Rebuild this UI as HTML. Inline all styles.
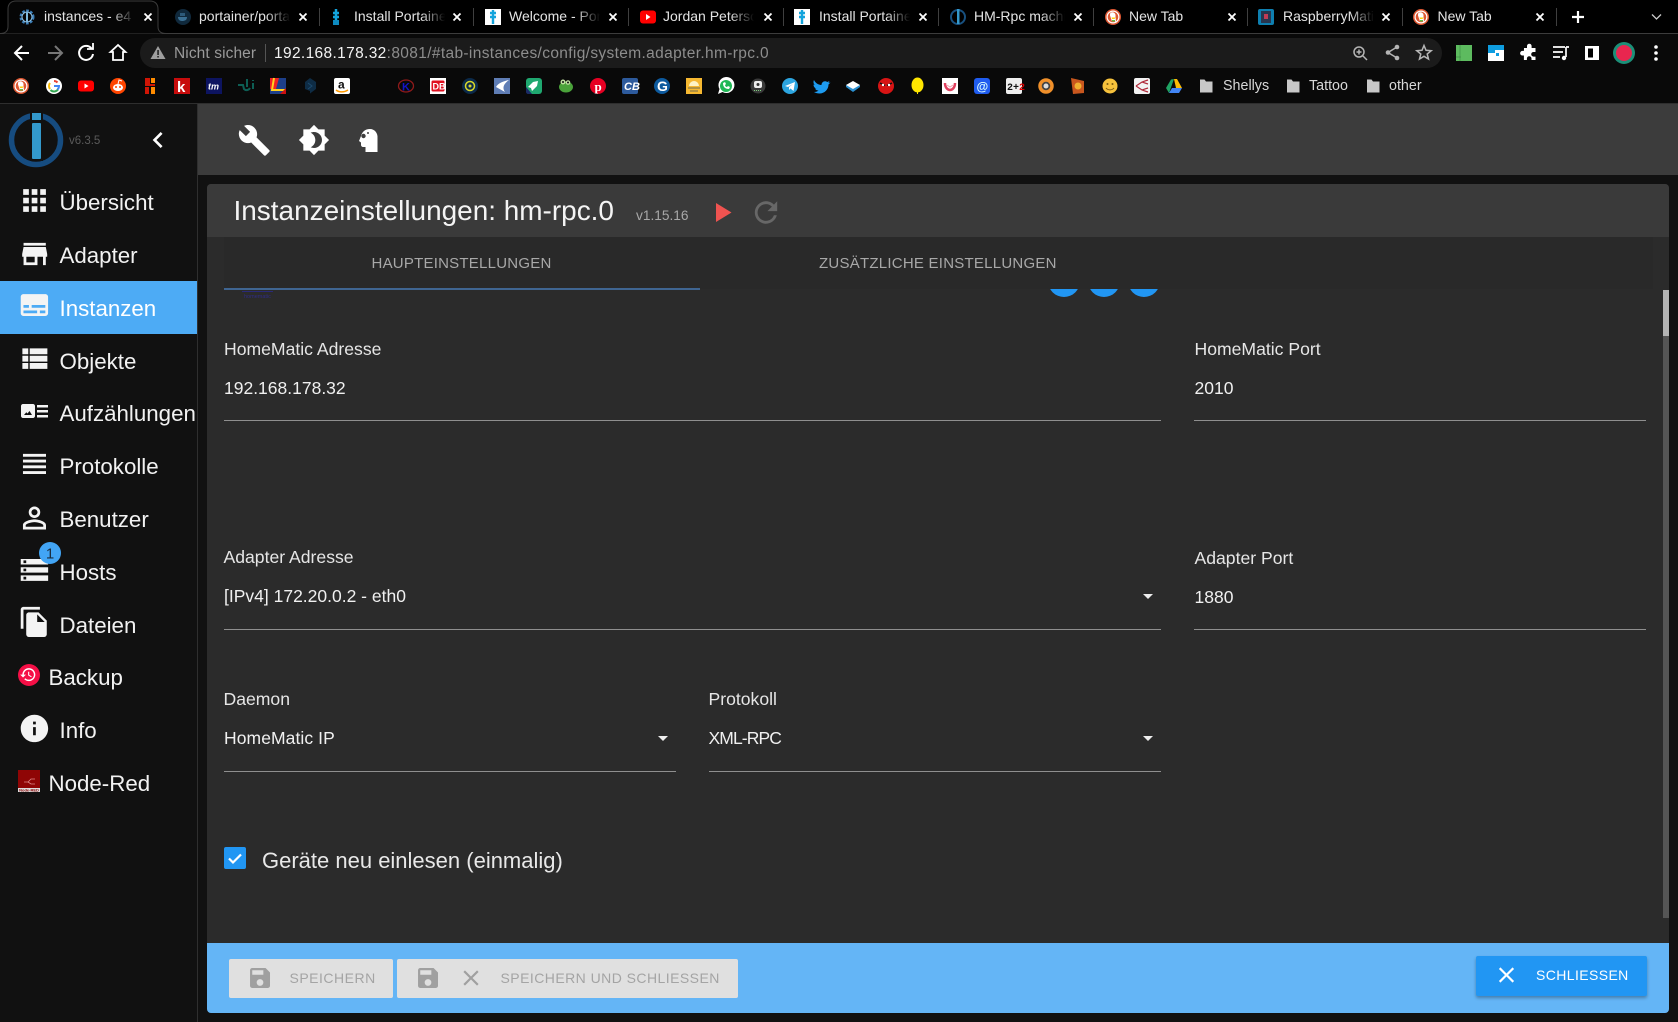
<!DOCTYPE html>
<html lang="de"><head><meta charset="utf-8"><title>instances</title>
<style>
html,body{margin:0;padding:0;width:1678px;height:1022px;overflow:hidden;background:#111}
body{position:relative;font-family:"Liberation Sans",sans-serif;color:#fff}
.a,.t{position:absolute}
.t{white-space:nowrap}
svg{position:absolute;overflow:visible}
.tab{font-size:14px;line-height:16px;top:8px;color:#e4e4e4;overflow:hidden;height:18px;white-space:nowrap;position:absolute;-webkit-mask-image:linear-gradient(to right,#000 72%,transparent 98%);mask-image:linear-gradient(to right,#000 72%,transparent 98%)}
.bm{font-size:14.300px;line-height:16px;top:78px;color:#d8d8d8}
.m{font-size:22.300px;line-height:22px;color:#f2f2f2;left:59.500px}
.lab{font-size:17.600px;line-height:20px;color:#e6e6e6}
.val{font-size:17.500px;line-height:20px;color:#f0f0f0}
.ln{position:absolute;height:1px;background:#8f8f8f}
.arr{position:absolute;width:0;height:0;border-left:5.500px solid transparent;border-right:5.500px solid transparent;border-top:5.500px solid #eee}
.btxt{font-size:14px;line-height:16px;letter-spacing:.55px}
</style></head><body>

<!-- browser chrome -->
<div class="a" style="left:0;top:0;width:1678px;height:34px;background:#000"></div>
<div class="a" style="left:0;top:33px;width:1678px;height:1px;background:#3c3c3c"></div>
<div class="a" style="left:0;top:34px;width:1678px;height:70px;background:#090909"></div>
<div class="a" style="left:0;top:103px;width:1678px;height:1px;background:#2e2e2e"></div>
<svg style="left:0;top:0" width="1678" height="34"><path d="M0 33.500c5 0 8-2 8-7V9c0-5 3-8 8-8h134c5 0 8 3 8 8v17.500c0 5 3 7 8 7" fill="#060606" stroke="#3c3c3c"/>
<g fill="#3f3f3f"><rect x="319" y="8" width="1" height="18"/><rect x="473" y="8" width="1" height="18"/><rect x="628" y="8" width="1" height="18"/><rect x="783" y="8" width="1" height="18"/><rect x="938" y="8" width="1" height="18"/><rect x="1093" y="8" width="1" height="18"/><rect x="1247" y="8" width="1" height="18"/><rect x="1402" y="8" width="1" height="18"/><rect x="1556" y="8" width="1" height="18"/></g>
<!-- tab favicons -->
<circle cx="27" cy="17" r="6" fill="none" stroke="#3d7fb8" stroke-width="3" stroke-dasharray="2.500 1.400"/><circle cx="27" cy="17" r="5" fill="none" stroke="#8fbfe0" stroke-width="1"/><rect x="26" y="12" width="2" height="10" fill="#7fb8dc"/>
<circle cx="183" cy="17" r="8" fill="#10293c"/><path d="M178 17h9c0 3-2 4-5 4s-4-2-4-4z" fill="#3a6f93"/><rect x="180" y="13" width="5" height="3" fill="#2d5a7a"/>
<path d="M336 9v16M333 13h6M333 17h6" stroke="#13a4dc" stroke-width="2.500"/><rect x="333" y="20" width="6" height="5" fill="#0d8ac0"/>
<rect x="485" y="9" width="16" height="16" fill="#fff"/><path d="M493 10v14M490 13h6M490 17h6" stroke="#13a4dc" stroke-width="2.400"/>
<rect x="640" y="10.500" width="16" height="13" rx="3" fill="#f00"/><path d="M646 14l4.500 3-4.500 3z" fill="#fff"/>
<rect x="794" y="9" width="16" height="16" fill="#fff"/><path d="M802 10v14M799 13h6M799 17h6" stroke="#13a4dc" stroke-width="2.400"/>
<circle cx="958" cy="17" r="7" fill="none" stroke="#18507f" stroke-width="2"/><rect x="957" y="9" width="2.500" height="15" fill="#39c"/>
<circle cx="1113" cy="17" r="8" fill="#de5833"/><circle cx="1113" cy="17" r="6.500" fill="#fff"/><circle cx="1113" cy="17" r="5.300" fill="#de5833"/><path d="M1111 12.500c3-1 5 1 4.500 4l.5 5h-4l-2-6c0-1.500 0-2.500 1-3z" fill="#fff"/><path d="M1111.500 17.500h4l-1 1.500h-2.500z" fill="#fdd20a"/><path d="M1112 20h3v1.500h-3z" fill="#65bc46"/>
<rect x="1258" y="9" width="16" height="16" rx="2" fill="#0e7fb0"/><rect x="1261" y="11" width="10" height="12" fill="#28364f"/><rect x="1264" y="14" width="4" height="5" fill="#c23b55"/>
<circle cx="1421" cy="17" r="8" fill="#de5833"/><circle cx="1421" cy="17" r="6.500" fill="#fff"/><circle cx="1421" cy="17" r="5.300" fill="#de5833"/><path d="M1419 12.500c3-1 5 1 4.500 4l.5 5h-4l-2-6c0-1.500 0-2.500 1-3z" fill="#fff"/><path d="M1419.500 17.500h4l-1 1.500h-2.500z" fill="#fdd20a"/><path d="M1420 20h3v1.500h-3z" fill="#65bc46"/>
<!-- close buttons -->
<g stroke="#fff" stroke-width="1.800" fill="none"><path d="M144.500 13.500l7 7m0-7l-7 7"/><path d="M299.500 13.500l7 7m0-7l-7 7"/><path d="M453.500 13.500l7 7m0-7l-7 7"/><path d="M609.500 13.500l7 7m0-7l-7 7"/><path d="M764.500 13.500l7 7m0-7l-7 7"/><path d="M919.500 13.500l7 7m0-7l-7 7"/><path d="M1074.500 13.500l7 7m0-7l-7 7"/><path d="M1228.500 13.500l7 7m0-7l-7 7"/><path d="M1382.500 13.500l7 7m0-7l-7 7"/><path d="M1536.500 13.500l7 7m0-7l-7 7"/>
<path d="M1572 17h12M1578 11v12" stroke-width="2.200"/><path d="M1652 14.500l4.500 4.500 4.500-4.500" stroke="#ccc" stroke-width="1.300"/></g>
</svg>
<div class="tab" style="left:44px;width:93px">instances - e4</div>
<div class="tab" style="left:199px;width:93px">portainer/portainer-ce</div>
<div class="tab" style="left:354px;width:93px">Install Portainer</div>
<div class="tab" style="left:509px;width:93px">Welcome - Portainer</div>
<div class="tab" style="left:663px;width:93px">Jordan Peterson</div>
<div class="tab" style="left:819px;width:93px">Install Portainer</div>
<div class="tab" style="left:974px;width:93px">HM-Rpc machine</div>
<div class="tab" style="left:1129px;width:93px;-webkit-mask-image:none;mask-image:none">New Tab</div>
<div class="tab" style="left:1283px;width:93px">RaspberryMatic</div>
<div class="tab" style="left:1437.500px;width:93px;-webkit-mask-image:none;mask-image:none">New Tab</div>

<!-- toolbar -->
<div class="a" style="left:140px;top:38px;width:1302px;height:30px;border-radius:15px;background:#1b1b1b"></div>
<svg style="left:0;top:34px" width="1678" height="36">
<g fill="none" stroke="#fff" stroke-width="2"><path d="M29 19H16M22 12l-7 7 7 7"/><path d="M48 19h13M55 12l7 7-7 7" stroke="#777"/><path d="M91.500 14.500A7 7 0 1 0 93 20" /><path d="M87 15h6V9" stroke-width="1.800"/><path d="M118 11l-7.500 7H113v8h10v-8h2.500z" stroke-width="1.800"/></g>
<path d="M158 12l7.500 13h-15z" fill="#9e9e9e"/><rect x="157.300" y="16" width="1.500" height="5" fill="#1b1b1b"/><rect x="157.300" y="22" width="1.500" height="1.500" fill="#1b1b1b"/>
<rect x="265" y="10" width="1" height="18" fill="#555"/>
<g fill="none" stroke="#b5b5b5" stroke-width="1.500"><circle cx="1359" cy="18" r="5"/><path d="M1363 22l4 4M1356.500 18h5M1359 15.500v5"/><path d="M1397 13l-9 5.500 9 5.500"/><path d="M1424 11.500l2 4.800 5.200.4-4 3.300 1.300 5-4.500-2.700-4.500 2.700 1.300-5-4-3.300 5.200-.4z"/></g>
<g fill="#b5b5b5"><circle cx="1397" cy="13" r="2.300"/><circle cx="1397" cy="24" r="2.300"/><circle cx="1388" cy="18.500" r="2.300"/></g>
<rect x="1456" y="11" width="16" height="16" fill="#5dbb5f"/><path d="M1460 11v16M1456 23h5" stroke="#3f8f45" stroke-width=".7"/>
<rect x="1488" y="11" width="16" height="16" fill="#0e9de0"/><path d="M1488 19h7v-3h9v11h-16z" fill="#fff"/><rect x="1496" y="19" width="3" height="3" fill="#0e9de0"/>
<path d="M1522 16h3v-2a2.300 2.300 0 0 1 4.600 0v2h3.900v4h-2a2.300 2.300 0 0 0 0 4.600h2V28h-4v-1.500a2.300 2.300 0 0 0-4.600 0V28h-3v-4.500h-1.500a2.300 2.300 0 0 1 0-4.600h1.500z" fill="#fff" transform="translate(2 -2)"/>
<path d="M1553 13h12M1553 18h10M1553 23h7" stroke="#fff" stroke-width="1.700"/><path d="M1566 13h3M1566 13v10" stroke="#fff" stroke-width="1.700" fill="none"/><circle cx="1564" cy="24" r="2.200" fill="#fff"/>
<rect x="1585" y="12" width="14" height="14" fill="#fff"/><rect x="1588" y="14.500" width="5" height="9" fill="#000"/>
<circle cx="1624" cy="19" r="11" fill="#1c8f78"/><circle cx="1624" cy="19" r="8" fill="#e8264f"/>
<g fill="#fff"><circle cx="1656" cy="13" r="1.800"/><circle cx="1656" cy="19" r="1.800"/><circle cx="1656" cy="25" r="1.800"/></g>
</svg>
<div class="t" style="left:174px;top:46px;font-size:15.500px;line-height:16px;letter-spacing:.1px;color:#9a9a9a">Nicht sicher</div>
<div class="t" style="left:274px;top:46px;font-size:15.500px;line-height:16px;color:#8d8d8d;letter-spacing:.35px"><span style="color:#f4f4f4">192.168.178.32</span>:8081/#tab-instances/config/system.adapter.hm-rpc.0</div>

<!-- bookmarks -->
<svg style="left:0;top:70px" width="1678" height="34">
<circle cx="21" cy="16" r="8" fill="#de5833"/><circle cx="21" cy="16" r="6.500" fill="#fff"/><circle cx="21" cy="16" r="5.300" fill="#de5833"/><path d="M19 11.500c3-1 5 1 4.500 4l.5 5h-4l-2-6c0-1.500 0-2.500 1-3z" fill="#fff"/><path d="M19.500 16.500h4l-1 1.500h-2.500z" fill="#fdd20a"/><path d="M20 19h3v1.500h-3z" fill="#65bc46"/>
<circle cx="54" cy="16" r="8" fill="#fff"/><path d="M54 11a5 5 0 0 1 3.500 1.500" stroke="#ea4335" stroke-width="2" fill="none"/><path d="M50 13a5 5 0 0 0 0 6" stroke="#fbbc05" stroke-width="2" fill="none"/><path d="M50.500 20a5 5 0 0 0 7.500-.5" stroke="#34a853" stroke-width="2" fill="none"/><path d="M54 16h5a5 5 0 0 1-1.500 3.500" stroke="#4285f4" stroke-width="2" fill="none"/>
<rect x="78" y="10.500" width="16" height="11" rx="3" fill="#f00"/><path d="M84.500 13.500l4 2.500-4 2.500z" fill="#fff"/>
<circle cx="118" cy="16" r="8" fill="#ff4500"/><ellipse cx="118" cy="17.500" rx="5" ry="3.500" fill="#fff"/><circle cx="116" cy="17" r="1" fill="#ff4500"/><circle cx="120" cy="17" r="1" fill="#ff4500"/><path d="M118 14l1-4 3 1" stroke="#fff" stroke-width="1" fill="none"/>
<rect x="145" y="8" width="5" height="8" fill="#d01505"/><rect x="151" y="8" width="4" height="5" fill="#ff8c00"/><rect x="145" y="14" width="10" height="2" fill="#d01505"/><rect x="145" y="17" width="4" height="7" fill="#d01505"/><rect x="151" y="17" width="4" height="7" fill="#ff8c00"/>
<rect x="174" y="8" width="16" height="16" fill="#c70c0c"/><text x="177" y="22" font-size="15" font-weight="bold" fill="#fff" font-family="Liberation Sans">k</text>
<rect x="206" y="8" width="16" height="16" fill="#0d1460"/><text x="208" y="19.500" font-size="9" font-weight="bold" font-style="italic" fill="#fff" font-family="Liberation Sans">tm</text>
<path d="M238 15h5l1 4c2 2 5 1 6-1M247 9v8M253 10v1M253 13v6" stroke="#0d5f55" stroke-width="2" fill="none"/>
<rect x="270" y="8" width="16" height="16" fill="#1d3f8a"/><path d="M270 8l9 0-3 11h-6z" fill="#e22"/><path d="M274 8l-2 12h14" stroke="#ffd21f" stroke-width="2" fill="none"/><path d="M280 24l6-6v6z" fill="#c11"/>
<path d="M310 8l6 4v7l-6 4.500V21l-5-2v-7z" fill="#0e2c45"/><path d="M308 13l4 3-4 3" stroke="#1c4a6e" fill="none"/>
<rect x="334" y="8" width="16" height="16" rx="2" fill="#fff"/><text x="338" y="18.500" font-size="12" font-weight="bold" fill="#111" font-family="Liberation Sans">a</text><path d="M336 20c3 2.500 8 2.500 12 0" stroke="#f90" stroke-width="1.500" fill="none"/>
<ellipse cx="406" cy="16" rx="7.500" ry="6" fill="none" stroke="#8f1a1a" stroke-width="1.300"/><text x="402" y="20.500" font-size="11" font-weight="bold" fill="#1414c8" font-family="Liberation Sans">K</text>
<rect x="430" y="8" width="16" height="16" fill="#fff"/><rect x="431.500" y="10.500" width="13" height="11" rx="1.500" fill="#e01020"/><text x="432.500" y="19.500" font-size="9" font-weight="bold" fill="#fff" font-family="Liberation Sans">DB</text>
<circle cx="470" cy="16" r="8" fill="#0b2a4a"/><circle cx="470" cy="16" r="4.500" fill="none" stroke="#d7d72a" stroke-width="1.500"/><circle cx="470" cy="16" r="1.500" fill="#d7d72a"/>
<rect x="494" y="8" width="16" height="16" fill="#5f7db5"/><path d="M509 10c-5 1-11 3-13 7l9 5c-2-3-3-7 4-12z" fill="#fff"/>
<rect x="526" y="8" width="16" height="16" rx="3" fill="#1fa870"/><path d="M528 17l5-5 5-1-1 5-5 5-1-3z" fill="#fff"/><path d="M526 17l6 7h-4c-1 0-2-1-2-2z" fill="#1a2a66"/>
<ellipse cx="566" cy="17" rx="7" ry="5.500" fill="#4aa23a"/><circle cx="563" cy="12" r="2.500" fill="#bfe0a0"/><circle cx="568" cy="12.500" r="2.300" fill="#bfe0a0"/><circle cx="563" cy="12" r="1" fill="#111"/><circle cx="568" cy="12.500" r="1" fill="#111"/>
<circle cx="598" cy="16" r="8" fill="#e60023"/><text x="594.500" y="21" font-size="13" font-weight="bold" fill="#fff" font-family="Liberation Serif">p</text>
<rect x="622" y="8" width="16" height="16" rx="2" fill="#2d5a9c"/><text x="624" y="20" font-size="11" font-weight="bold" font-style="italic" fill="#fff" font-family="Liberation Sans">CB</text>
<circle cx="662" cy="16" r="8" fill="#0d5a9e"/><text x="657" y="21" font-size="14" font-weight="bold" fill="#fff" font-family="Liberation Sans">G</text>
<rect x="686" y="8" width="16" height="16" fill="#f6b831"/><path d="M689 16a5 5 0 0 1 10 0z" fill="#fff3c4"/><path d="M688 18h12M690 21h8" stroke="#8a7a4a" stroke-width="1.300"/>
<path d="M718 24l1.500-5a8 8 0 1 1 3 3z" fill="#fff"/><circle cx="726" cy="16" r="6" fill="#1fb855"/><path d="M723 13c0 4 2 6 6 6l1-2-2-1-1 1c-1 0-2-1-2-2l1-1-1-2z" fill="#fff"/>
<circle cx="758" cy="16" r="7.500" fill="#3a3a3a"/><rect x="754" y="11" width="8" height="7" rx="2" fill="#eee"/><circle cx="758" cy="14.500" r="1.500" fill="#333"/><path d="M754 20.500h8" stroke="#7fd07f" stroke-dasharray="1 1"/>
<circle cx="790" cy="16" r="8" fill="#2ca5e0"/><path d="M785 16l10-4-1.500 9-3-2.500-1.500 1.500v-3l4-3-5 3z" fill="#fff"/>
<path d="M815 12c2 3 5 4 7 4 0-3 3-5 6-3l2-1-1 2 2-.5-2 2c0 5-4 9-9 9-2 0-4-.5-5.500-1.500 2 0 3.500-.5 4.500-1.500-2 0-3-1-3.500-2h1.500c-2-.5-3-2-3-4l1.500.5c-1.500-1-2-3-1-5z" fill="#1d9bf0" transform="translate(-.5 -1)"/>
<path d="M846 15l7-4 7 4-7 5z" fill="#fff"/><path d="M846 15l7 4 7-4v2l-7 5-7-5z" fill="#2a8fd0"/>
<circle cx="886" cy="16" r="8" fill="#d81414"/><path d="M880 13l5 2.500M892 13l-5 2.500" stroke="#111" stroke-width="1.500"/><circle cx="883" cy="15" r="1.200" fill="#fff"/><circle cx="889" cy="15" r="1.200" fill="#fff"/>
<ellipse cx="917.500" cy="15" rx="6" ry="7.500" fill="#ffe600"/><path d="M917.500 22v2" stroke="#ffe600" stroke-width="1"/>
<rect x="942" y="8" width="16" height="16" fill="#fff"/><path d="M945 13c0 5 3 7 5 7s5-2 5-7" stroke="#e0405e" stroke-width="2.500" fill="none"/><path d="M947 15l3 2 3-2" stroke="#f0a0b0" stroke-width="1" fill="none"/>
<rect x="974" y="8" width="16" height="16" rx="3" fill="#1f5cf0"/><text x="976.500" y="20.500" font-size="12" font-weight="bold" fill="#dff" font-family="Liberation Sans">@</text>
<rect x="1006" y="8" width="16" height="16" rx="2" fill="#eee"/><text x="1007" y="20" font-size="10" font-weight="bold" fill="#111" font-family="Liberation Mono">2+<tspan fill="#d00">2</tspan></text>
<circle cx="1046" cy="16" r="6" fill="#444" stroke="#f0902a" stroke-width="3.500"/><circle cx="1046" cy="16" r="2.500" fill="#ddd"/>
<path d="M1071 8l13 3v12l-11 1z" fill="#c9571e"/><circle cx="1078" cy="16" r="3.500" fill="#f0b030"/>
<circle cx="1110" cy="16" r="7.500" fill="#f7c23c"/><circle cx="1107.500" cy="14" r="1" fill="#7a5a10"/><circle cx="1112.500" cy="14" r="1" fill="#7a5a10"/><path d="M1106 18c2 2.500 6 2.500 8 0" stroke="#7a5a10" fill="none"/>
<rect x="1134" y="8" width="16" height="16" rx="2" fill="#f2f2f2"/><path d="M1136 16l6-4 6-2M1136 16l6 4 6 2M1142 12l6 2M1142 20l6-2" stroke="#b02a3a" stroke-width="1.200" fill="none"/>
<path d="M1174 9l3 0 5 9h-6z" fill="#fbbc05"/><path d="M1174 9l-3 .5-5 8.500 3 5z" fill="#1fa463"/><path d="M1169 23l3-5h10l-3 5z" fill="#4285f4"/>
<g fill="#c8c8c8"><path d="M1200 9.500h4.500l1.500 2h6.500v11h-12.500z"/><path d="M1287 9.500h4.500l1.500 2h6.500v11h-12.500z"/><path d="M1367 9.500h4.500l1.500 2h6.500v11h-12.500z"/></g>
</svg>
<div class="t bm" style="left:1223px">Shellys</div>
<div class="t bm" style="left:1309px">Tattoo</div>
<div class="t bm" style="left:1389px">other</div>

<!-- sidebar -->
<div class="a" style="left:0;top:104px;width:197px;height:918px;background:#111"></div>
<div class="a" style="left:197px;top:104px;width:1px;height:918px;background:#2f2f2f"></div>
<div class="a" style="left:0;top:281px;width:197px;height:53px;background:#4dabf5"></div>
<svg style="left:0;top:0" width="200" height="800">
<circle cx="36" cy="140" r="24.500" fill="none" stroke="#164c80" stroke-width="5.500"/>
<rect x="30" y="110" width="13" height="51" fill="#111"/>
<rect x="32" y="113" width="9" height="7" fill="#39c"/><rect x="32" y="123" width="9" height="36" rx="1" fill="#39c"/>
<path transform="translate(142 124) scale(1.333)" d="M15.410 7.410L14 6l-6 6 6 6 1.410-1.410L10.830 12z" fill="#fff"/>
<g fill="#f4f4f4">
<path transform="translate(17.500 183.500) scale(1.420)" d="M4 8h4V4H4v4zm6 12h4v-4h-4v4zm-6 0h4v-4H4v4zm0-6h4v-4H4v4zm6 0h4v-4h-4v4zm6-10v4h4V4h-4zm-6 4h4V4h-4v4zm6 6h4v-4h-4v4zm0 6h4v-4h-4v4z"/>
<path transform="translate(18 237.300) scale(1.390)" d="M20 4H4v2h16V4zm1 10v-2l-1-5H4l-1 5v2h1v6h10v-6h4v6h2v-6h1zm-9 4H6v-4h6v4z"/>
<path transform="translate(18 288.600) scale(1.367)" d="M20 4H4c-1.100 0-2 .9-2 2v12c0 1.100.9 2 2 2h16c1.100 0 2-.9 2-2V6c0-1.100-.9-2-2-2zM4 12h4v2H4v-2zm10 6H4v-2h10v2zm6 0h-4v-2h4v2zm0-4H10v-2h10v2z"/>
<path transform="translate(16.500 341) scale(1.470)" d="M4 14h4v-4H4v4zm0 5h4v-4H4v4zM4 9h4V5H4v4zm5 5h12v-4H9v4zm0 5h12v-4H9v4zM9 5v4h12V5H9z"/>
<path d="M23 404h10c1.100 0 2 .9 2 2v10c0 1.100-.9 2-2 2H23c-1.100 0-2-.9-2-2v-10c0-1.100.9-2 2-2zm1 11h8l-2.500-4-2 2.500-1.200-1.300z" fill-rule="evenodd"/>
<rect x="37" y="405" width="11" height="2.500"/><rect x="37" y="410" width="11" height="2.500"/><rect x="37" y="415" width="11" height="2.500"/>
<path transform="translate(17.200 446.700) scale(1.440)" d="M4 15h16v-2H4v2zm0 4h16v-2H4v2zm0-8h16V9H4v2zm0-6v2h16V5H4z"/>
<path transform="translate(17.200 500.700) scale(1.440)" d="M12 5.900c1.160 0 2.100.94 2.100 2.100s-.94 2.100-2.100 2.100S9.900 9.160 9.900 8s.94-2.100 2.100-2.100m0 9c2.970 0 6.100 1.460 6.100 2.100v1.100H5.900V17c0-.64 3.130-2.100 6.100-2.100M12 4C9.790 4 8 5.790 8 8s1.790 4 4 4 4-1.790 4-4-1.790-4-4-4zm0 9c-2.670 0-8 1.340-8 4v3h16v-3c0-2.660-5.330-4-8-4z"/>
<path transform="translate(18 553.500) scale(1.370)" d="M2 20h20v-4H2v4zm2-3h2v2H4v-2zM2 4v4h20V4H2zm4 3H4V5h2v2zm-4 7h20v-4H2v4zm2-3h2v2H4v-2z"/>
<path transform="translate(18 605.500) scale(1.370)" d="M16 1H4c-1.100 0-2 .9-2 2v14h2V3h12V1zm-1 4l6 6v10c0 1.100-.9 2-2 2H7.990C6.890 23 6 22.100 6 21l.01-14c0-1.100.89-2 1.990-2h7zm-1 7h5.500L14 6.500V12z"/>
<path transform="translate(18 712) scale(1.370)" d="M12 2C6.480 2 2 6.480 2 12s4.480 10 10 10 10-4.480 10-10S17.520 2 12 2zm1 15h-2v-6h2v6zm0-8h-2V7h2v2z"/>
</g>
<circle cx="50" cy="553" r="11" fill="#42a5f5"/>
<text x="50" y="558.500" font-size="15" text-anchor="middle" fill="#1a2a3a" font-family="Liberation Sans">1</text>
<circle cx="29" cy="675" r="11" fill="#f50f46"/>
<path transform="translate(19.500 666) scale(.72)" d="M13 3c-4.970 0-9 4.030-9 9H1l3.890 3.890.07.14L9 12H6c0-3.870 3.130-7 7-7s7 3.130 7 7-3.130 7-7 7c-1.930 0-3.680-.79-4.940-2.060l-1.420 1.420C8.270 19.990 10.510 21 13 21c4.970 0 9-4.030 9-9s-4.030-9-9-9zm-1 5v5l4.280 2.540.72-1.210-3.500-2.080V8H12z" fill="#fff"/>
<rect x="18" y="770" width="22" height="22" fill="#8f0505"/><rect x="18" y="788" width="22" height="4" fill="#ddd"/><path d="M24 782h4l3-3h4M28 782l3 2h4" stroke="#d88" stroke-width=".8" fill="none"/>
<text x="29" y="791.500" font-size="4" font-weight="bold" text-anchor="middle" fill="#800" font-family="Liberation Sans">Node-RED</text>
</svg>
<div class="t" style="left:69px;top:135px;font-size:11.500px;line-height:13px;color:#5a5a5a">v6.3.5</div>
<div class="t m" style="top:192px">Übersicht</div>
<div class="t m" style="top:245px">Adapter</div>
<div class="t m" style="top:298px;color:#fff">Instanzen</div>
<div class="t m" style="top:351px">Objekte</div>
<div class="t m" style="top:403px">Aufzählungen</div>
<div class="t m" style="top:456px">Protokolle</div>
<div class="t m" style="top:509px">Benutzer</div>
<div class="t m" style="top:562px">Hosts</div>
<div class="t m" style="top:615px">Dateien</div>
<div class="t m" style="top:667px;left:48.500px">Backup</div>
<div class="t m" style="top:720px">Info</div>
<div class="t m" style="top:773px;left:48.500px">Node-Red</div>

<!-- top icon bar -->
<div class="a" style="left:198px;top:104px;width:1480px;height:71px;background:#3c3c3c"></div>
<svg style="left:0;top:0" width="400" height="176"><g fill="#fff">
<path transform="translate(237.500 123.500) scale(1.400)" d="M22.700 19l-9.100-9.100c.9-2.300.4-5-1.500-6.900-2-2-5-2.400-7.400-1.300L9 6 6 9 1.600 4.700C.4 7.100.9 10.100 2.900 12.100c1.900 1.900 4.600 2.400 6.900 1.500l9.100 9.100c.4.4 1 .4 1.400 0l2.300-2.300c.5-.4.500-1.100.1-1.400z"/>
<path fill-rule="evenodd" transform="translate(298 124) scale(1.333)" d="M20 8.690V4h-4.690L12 .69 8.690 4H4v4.690L.69 12 4 15.310V20h4.690L12 23.310 15.310 20H20v-4.690L23.310 12 20 8.690zM12 18c-.89 0-1.740-.2-2.500-.55C11.560 16.500 13 14.420 13 12s-1.440-4.500-3.500-5.450C10.260 6.200 11.110 6 12 6c3.310 0 6 2.690 6 6s-2.690 6-6 6z"/>
<path d="M370 129c-5 0-8 3-9 7l-2 5 2 1.500v2.500c0 1 1 2 2 2h2.500v5h12v-14c.5-5-3-9-7.500-9z"/></g>
<circle cx="363.500" cy="136" r="2.200" fill="#3c3c3c"/><circle cx="368" cy="133" r="1" fill="#3c3c3c"/>
</svg>

<!-- card -->
<div class="a" style="left:207px;top:184px;width:1462px;height:829px;background:#2b2b2b;border-radius:4px"></div>
<div class="a" style="left:207px;top:184px;width:1462px;height:53px;background:#3a3a3a;border-radius:4px 4px 0 0"></div>
<div class="t" style="left:233.500px;top:197px;font-size:27.950px;line-height:28px;color:#f4f4f4">Instanzeinstellungen: hm-rpc.0</div>
<div class="t" style="left:636px;top:208px;font-size:13.700px;line-height:16px;color:#a8a8a8">v1.15.16</div>
<svg style="left:0;top:0" width="800" height="240"><path d="M716 203l15.500 9.500L716 222z" fill="#ef5350"/>
<path transform="translate(749.200 195.700) scale(1.400)" d="M17.650 6.350C16.200 4.900 14.210 4 12 4c-4.420 0-7.990 3.580-7.990 8s3.570 8 7.990 8c3.730 0 6.840-2.550 7.730-6h-2.080c-.82 2.330-3.040 4-5.650 4-3.310 0-6-2.690-6-6s2.690-6 6-6c1.660 0 3.140.69 4.220 1.780L13 11h7V4l-2.350 2.350z" fill="#676767"/></svg>

<!-- blue circles under tab bar -->
<div class="a" style="left:1047.500px;top:265px;width:32px;height:32px;border-radius:50%;background:#2196f3"></div>
<div class="a" style="left:1088px;top:265px;width:32px;height:32px;border-radius:50%;background:#2196f3"></div>
<div class="a" style="left:1127.500px;top:265px;width:32px;height:32px;border-radius:50%;background:#2196f3"></div>

<!-- tabs -->
<div class="a" style="left:224px;top:237px;width:1429px;height:52px;background:#292929"></div>
<div class="a" style="left:224px;top:288px;width:476px;height:2px;background:#3f6591"></div>
<div class="t" style="left:371.500px;top:256px;font-size:15px;line-height:16px;letter-spacing:.23px;color:#a8a8a8">HAUPTEINSTELLUNGEN</div>
<div class="t" style="left:819px;top:256px;font-size:15px;line-height:16px;letter-spacing:.24px;color:#a8a8a8">ZUSÄTZLICHE EINSTELLUNGEN</div>
<div class="a" style="left:242px;top:291px;width:31px;height:1px;background:#2a2a7a"></div>
<div class="t" style="left:244px;top:294px;font-size:5.500px;line-height:6px;color:#2f2c86">homematic</div>

<!-- scrollbar -->
<div class="a" style="left:1663px;top:290px;width:6px;height:628px;background:#555"></div>
<div class="a" style="left:1663px;top:290px;width:6px;height:46px;background:#b4b4b4"></div>

<!-- form -->
<div class="t lab" style="left:224px;top:339px">HomeMatic Adresse</div>
<div class="t val" style="left:224px;top:378px">192.168.178.32</div>
<div class="ln" style="left:224px;top:420px;width:937px"></div>
<div class="t lab" style="left:1194.500px;top:339px">HomeMatic Port</div>
<div class="t val" style="left:1194.500px;top:378px">2010</div>
<div class="ln" style="left:1194px;top:420px;width:452px"></div>

<div class="t lab" style="left:223.500px;top:547px">Adapter Adresse</div>
<div class="t val" style="left:224px;top:586px">[IPv4] 172.20.0.2 - eth0</div>
<div class="arr" style="left:1143px;top:594px"></div>
<div class="ln" style="left:224px;top:629px;width:937px"></div>
<div class="t lab" style="left:1194.500px;top:548px">Adapter Port</div>
<div class="t val" style="left:1194.500px;top:587px">1880</div>
<div class="ln" style="left:1194px;top:629px;width:452px"></div>

<div class="t lab" style="left:223.500px;top:689px">Daemon</div>
<div class="t val" style="left:224px;top:728px;letter-spacing:.08px">HomeMatic IP</div>
<div class="arr" style="left:657.500px;top:736px"></div>
<div class="ln" style="left:224px;top:771px;width:452px"></div>
<div class="t lab" style="left:708.500px;top:689px">Protokoll</div>
<div class="t val" style="left:708.500px;top:728px;letter-spacing:-.9px">XML-RPC</div>
<div class="arr" style="left:1143px;top:736px"></div>
<div class="ln" style="left:709px;top:771px;width:452px"></div>

<div class="a" style="left:224px;top:847px;width:22px;height:22px;border-radius:2px;background:#2196f3"></div>
<svg style="left:224px;top:847px" width="22" height="22"><path d="M5 11.500l4 4 8-8" fill="none" stroke="#fff" stroke-width="2.200"/></svg>
<div class="t" style="left:262px;top:850px;font-size:22px;line-height:22px;color:#e8e8e8">Geräte neu einlesen (einmalig)</div>

<!-- footer -->
<div class="a" style="left:207px;top:943px;width:1462px;height:70px;background:#64b5f6;border-radius:0 0 4px 4px"></div>
<div class="a" style="left:229px;top:959px;width:164px;height:39px;background:#e0e0e0;border-radius:2px"></div>
<div class="a" style="left:397px;top:959px;width:341px;height:39px;background:#e0e0e0;border-radius:2px"></div>
<div class="a" style="left:1476px;top:956px;width:171px;height:40px;background:#2196f3;border-radius:2px;box-shadow:0 2px 3px rgba(0,0,0,.3)"></div>
<svg style="left:0;top:0" width="1678" height="1022">
<g fill="#a0a0a0">
<path transform="translate(246.700 964.700) scale(1.110)" d="M17 3H5c-1.110 0-2 .9-2 2v14c0 1.100.89 2 2 2h14c1.100 0 2-.9 2-2V7l-4-4zm-5 16c-1.660 0-3-1.340-3-3s1.340-3 3-3 3 1.340 3 3-1.340 3-3 3zm3-10H5V5h10v4z"/>
<path transform="translate(414.700 964.700) scale(1.110)" d="M17 3H5c-1.110 0-2 .9-2 2v14c0 1.100.89 2 2 2h14c1.100 0 2-.9 2-2V7l-4-4zm-5 16c-1.660 0-3-1.340-3-3s1.340-3 3-3 3 1.340 3 3-1.340 3-3 3zm3-10H5V5h10v4z"/>
<path transform="translate(458 965) scale(1.083)" d="M19 6.410L17.590 5 12 10.590 6.410 5 5 6.410 10.590 12 5 17.590 6.410 19 12 13.410 17.590 19 19 17.590 13.410 12z"/>
</g>
<path transform="translate(1493.500 962) scale(1.083)" d="M19 6.410L17.590 5 12 10.590 6.410 5 5 6.410 10.590 12 5 17.590 6.410 19 12 13.410 17.590 19 19 17.590 13.410 12z" fill="#fff"/>
</svg>
<div class="t btxt" style="left:289.500px;top:970px;color:#a4a4a4;letter-spacing:.5px">SPEICHERN</div>
<div class="t btxt" style="left:500.500px;top:970px;color:#a4a4a4;letter-spacing:.45px">SPEICHERN UND SCHLIESSEN</div>
<div class="t btxt" style="left:1536px;top:967px;color:#fff;letter-spacing:.4px">SCHLIESSEN</div>
</body></html>
